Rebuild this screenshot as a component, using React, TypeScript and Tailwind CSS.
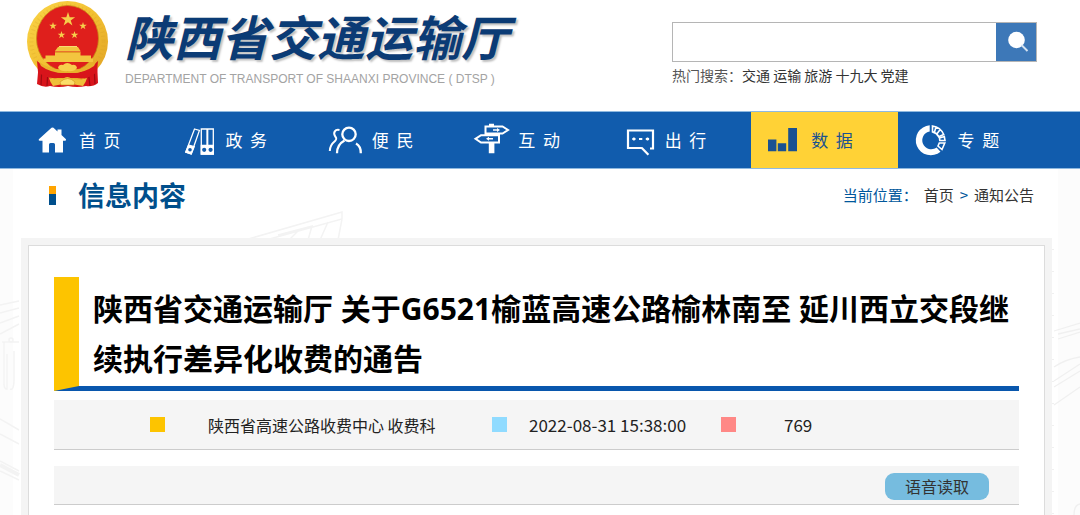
import type { ReactNode } from "react";

const STAR = "0,-1 0.225,-0.309 0.951,-0.309 0.363,0.118 0.588,0.809 0,0.382 -0.588,0.809 -0.363,0.118 -0.951,-0.309 -0.225,-0.309";

function Star({ x, y, r }: { x: number; y: number; r: number }) {
  return <polygon points={STAR} fill="#f6cf4b" transform={`translate(${x} ${y}) scale(${r})`} />;
}

function Emblem() {
  return (
    <svg viewBox="0 0 82 88" className="h-[88px] w-[82px] shrink-0" aria-label="国徽" role="img">
      <defs>
        <linearGradient id="gold" x1="0" y1="0" x2="1" y2="1">
          <stop offset="0" stopColor="#fad548" />
          <stop offset="0.5" stopColor="#f2c032" />
          <stop offset="1" stopColor="#dfa024" />
        </linearGradient>
      </defs>
      <path d="M12 61 L10 84 Q17 88 23 86 Q32 88 41 86 Q50 88 59 86 Q66 87 71 83 L70 61 Z" fill="#d8141b" />
      <path d="M15 66 L14 85 M21 70 L20 86 M61 70 L63 86 M67 66 L68 84" stroke="#9f0b12" strokeWidth="1.2" />
      <circle cx="40.5" cy="41.5" r="40.5" fill="url(#gold)" />
      <circle cx="40.5" cy="41.5" r="36" fill="none" stroke="#d59a1e" strokeWidth="4" strokeDasharray="1 3" opacity="0.25" />
      <ellipse cx="40.5" cy="38.5" rx="31" ry="33" fill="#df1f1c" stroke="#c98a16" strokeWidth="0.8" />
      <Star x={41} y={19.5} r={7.5} />
      <Star x={26} y={26} r={4} />
      <Star x={56} y={26} r={4} />
      <Star x={34.5} y={35} r={4} />
      <Star x={47.5} y={35} r={4} />
      <path d="M31 47 h20 l2.5 4 h-25.5 z M28 51.5 h25.5 v4 h10.5 v3 h2 v3.5 h-49.5 v-3.5 h2 v-3 h9.5 z" fill="#f3c53f" />
      <path d="M32 46.5 h18" stroke="#f9dc70" strokeWidth="1" />
      <path d="M28 52.5 h25" stroke="#dc8d1b" strokeWidth="0.7" />
      <path d="M10 61 Q22 71 35 73 L48 73 Q61 71 71 61 L70 72 Q61 80 50 78 L31 78 Q19 79 11 72 Z" fill="#d8141b" />
      <path d="M12 62 Q25 71 41 69 Q58 71 69 62 L67 66 Q56 74 41 73 Q25 74 14 66 Z" fill="#e9b12b" />
      <path d="M31 68 q1 -4 5 -3 q4 -4 9 0 q4 -1 5 3 q-3 4 -9.5 3 q-6 1 -9.5 -3z" fill="#f7cf4c" />
      <path d="M22 78 q9 3 14 1 q4 -4 9 0 q6 2 15 -1 q-1 4 -4 8 q-9 -2 -15.5 -2 q-7 0 -14.5 2 q-3 -4 -4 -8z" fill="#efc03a" />
      <path d="M33 82 q8 -7 15 0 l-1 3 h-13 z" fill="#fbdd69" stroke="#cf8f1c" strokeWidth="0.6" />
    </svg>
  );
}

function NavIcon({ children }: { children: ReactNode }) {
  return (
    <svg viewBox="0 0 36 34" className="h-[34px] w-9 shrink-0 overflow-visible" fill="none" stroke="#fff" strokeWidth="1.6" aria-hidden="true">
      {children}
    </svg>
  );
}

const HomeIcon = () => (
  <NavIcon>
    <path fill="#fff" stroke="none" d="M16.5 4.8 Q17.5 4 18.5 4.8 L22.5 8.5 V6.5 H26.5 V12 L31 16.2 Q31.2 17.8 30 17.8 H28 V29.5 H20 V21.5 Q20 20 18.5 20 H15.5 Q14 20 14 21.5 V29.5 H7.5 V17.8 H5 Q3.2 17.8 3.8 16.2 Z" />
  </NavIcon>
);

const BindersIcon = () => (
  <NavIcon>
    <path strokeWidth="1.3" d="M13.5 6 L18.4 7.5 L10.2 31 L4.8 29 Z M20.3 6 H26 V31 H20.3 Z M26.7 6 H32.3 V31 H26.7 Z" />
    <path strokeWidth="1.3" d="M7.7 22 L13.2 23.7 L10.2 31 L4.8 29 Z M20.3 22.5 H32.3 V31 H20.3 Z" fill="#fff" />
    <g fill="#115cad" stroke="none">
      <circle cx="9" cy="26.8" r="1.8" />
      <circle cx="23.2" cy="26.8" r="2.1" />
      <circle cx="29.6" cy="26.8" r="2.1" />
    </g>
  </NavIcon>
);

const PeopleIcon = () => (
  <NavIcon>
    <g strokeWidth="2.3">
      <circle cx="21" cy="11.3" r="6.7" />
      <path d="M9 30.3 C9 24 11 20.5 16.5 17.5 M28 20.5 C31.5 22.5 33 25.5 32.8 30.3" />
      <path strokeWidth="2" d="M11.5 7 C7 6 5 9.5 7 13 C8 15 9.5 15.5 7 18 C4 20.5 1.8 23 1.8 28" />
    </g>
  </NavIcon>
);

const SignpostIcon = () => (
  <NavIcon>
    <path strokeWidth="2" d="M11.5 3.5 H28.5 L34 7 L28.5 10.5 H11.5 Z M25 12.2 H7 L1.5 15.8 L7 19.5 H25 Z" />
    <path fill="#fff" stroke="none" d="M15 0.8 H20 V3 H15 Z M14.8 19.5 H20.4 V30.3 H14.8 Z M19 6.2 H23 V5 L26 7 L23 9 V7.7 H19 Z M19 15 H15 V13.8 L12 15.8 L15 17.8 V16.5 H19 Z" />
  </NavIcon>
);

const ChatIcon = () => (
  <NavIcon>
    <path strokeWidth="2.2" d="M20.9 25 H7 V7.5 H32 V25.5 H29 M20.6 24.8 L27.4 31.8" />
    <path strokeWidth="2" d="M11.3 16 H14.5 M18 16 H21.3 M24.8 16 H28.1" />
    <path d="M12.9 14.5 V17.5 M26.5 14.5 V17.5" />
  </NavIcon>
);

const BarsIcon = () => (
  <NavIcon>
    <path fill="#1a5191" stroke="none" d="M1 16.5 H9.4 V28.2 H1 Z M10.8 20.2 H19.2 V28.2 H10.8 Z M21.2 5 H30 V28.2 H21.2 Z" />
  </NavIcon>
);

const DonutIcon = () => (
  <NavIcon>
    <path fill="#fff" stroke="none" d="M15.7 2.3 A15 15 0 1 0 26.5 28.7 L22.6 24.5 A9 9 0 1 1 15.7 8.4 Z" />
    <path strokeWidth="1.6" d="M18.5 3 A14.4 14.4 0 0 1 29.7 11.5 L24.6 13.7 A9 9 0 0 0 18.5 8.9 Z M22 4 L20.5 9 M26 6.7 L22.8 11 M30.3 13.5 L31 17.5 H25.8 L25.5 15 Z M30.8 20 L28 26.5 L24 23 L25.3 20 Z" />
  </NavIcon>
);

const NAV = [
  { label: "首\u00a0\u00a0页", Icon: HomeIcon },
  { label: "政\u00a0\u00a0务", Icon: BindersIcon },
  { label: "便\u00a0\u00a0民", Icon: PeopleIcon },
  { label: "互\u00a0\u00a0动", Icon: SignpostIcon },
  { label: "出\u00a0\u00a0行", Icon: ChatIcon },
  { label: "数\u00a0\u00a0据", Icon: BarsIcon, active: true },
  { label: "专\u00a0\u00a0题", Icon: DonutIcon },
];

const HOT = ["交通", "运输", "旅游", "十九大", "党建"];

function Header() {
  return (
    <header className="flex h-[111px] items-start justify-between bg-white pl-[27px] pr-[43px]">
      <div className="flex gap-4">
        <Emblem />
        <div className="pt-2">
          <div className="text-[48px] font-bold italic leading-[54px] text-[#0b3b75] [text-shadow:2px_2px_2px_rgba(0,0,0,0.25)]">
            陕西省交通运输厅
          </div>
          <div className="mt-[9px] font-['Liberation_Sans',sans-serif] text-[12px] leading-4 text-[#a3a3a3]">
            DEPARTMENT OF TRANSPORT OF SHAANXI PROVINCE ( DTSP )
          </div>
        </div>
      </div>
      <div className="w-[365px] pt-[22px]">
        <form className="flex h-10 border border-[#b5b5b5]" onSubmit={(e) => e.preventDefault()}>
          <input type="text" aria-label="搜索" className="min-w-0 flex-1 bg-white px-2 text-sm outline-none" />
          <button type="submit" aria-label="提交搜索" className="flex w-10 items-center justify-center bg-[#3d78b8] pl-1">
            <svg viewBox="0 0 22 22" className="size-[22px]" aria-hidden="true">
              <circle cx="9.5" cy="9" r="8.3" fill="#fff" />
              <path d="M14.5 14 L20.5 20" stroke="#d5e3f1" strokeWidth="2" />
            </svg>
          </button>
        </form>
        <p className="mt-[3px] text-[14px] leading-5 text-[#555]">
          热门搜索：
          {HOT.map((word, i) => (
            <span key={word}>
              {i > 0 && " "}
              <a href="#" className="text-[#333]">{word}</a>
            </span>
          ))}
        </p>
      </div>
    </header>
  );
}

function Nav() {
  return (
    <nav className="border-y border-[#8fb9e0] bg-[#115cad] pl-[19px] pr-9">
      <ul className="grid grid-cols-7">
        {NAV.map(({ label, Icon, active }) => (
          <li key={label}>
            <a
              href="#"
              className={`flex h-14 items-center gap-2 pl-4 text-[17px] ${active ? "bg-[#ffd236] text-[#1a5191]" : "text-white"}`}
            >
              <Icon />
              {label}
            </a>
          </li>
        ))}
      </ul>
    </nav>
  );
}

function Backdrop() {
  return (
    <div className="pointer-events-none absolute inset-0 flex justify-between overflow-hidden" aria-hidden="true">
      <svg viewBox="0 0 360 346" className="h-[346px] w-[360px] shrink-0" fill="none" stroke="#f3f3f3" strokeWidth="1.5">
        <path d="M0 0 H13 V346 H0 Z" fill="#fcfcfc" stroke="none" />
        <path d="M245 71 L342 43 V50 L266 71 M342 50 L338 71 M278 66 L312 57 L308 71 M290 70 L298 62 M328 53 L320 71" />
        <path d="M0 136 L19 132 M0 144 L19 139 M0 154 L19 147 M0 165 L19 155 M2 173 H19 M4 173 V215 Q4 220 7 220 V185 M10 220 Q14 222 14 210 V182 M0 250 L19 261 M0 265 L19 275 M0 292 L19 302 M0 302 L19 311" />
        <circle cx="11" cy="171" r="2" />
        <path d="M0 296 L19 306" strokeWidth="4" />
      </svg>
      <svg viewBox="0 0 28 346" className="h-[346px] w-7 shrink-0" fill="none" stroke="#f0f0f0" strokeWidth="1.3">
        <path d="M6 0 H28 V346 H6 Z" fill="#fcfcfc" stroke="none" />
        <path d="M0 80 V346" strokeDasharray="1 21" strokeWidth="4" />
        <path d="M2 162 L28 154 M6 165 L28 160 M6 170 L28 163 M2 198 Q14 190 28 188 M2 212 L28 195 M2 218 L28 202 M2 236 L28 218 M22 346 Q22 336 28 335" />
      </svg>
    </div>
  );
}

function Article() {
  return (
    <div className="mt-[11px] flex flex-1 flex-col bg-[#f4f4f4] px-[7px] pt-[7px]">
      <article className="flex-1 border border-b-0 border-[#dcdcdc] bg-white px-[25px] pt-[31px]">
        <div className="flex border-b-[5px] border-[#0957ad]">
          <div className="-mb-[5px] w-[25px] shrink-0 bg-[#fdc400] [clip-path:polygon(0_0,100%_0,100%_calc(100%-5px),0_100%)]" />
          <h1 className="pb-0.5 pl-3.5 pt-[7px] font-['Noto_Sans','Noto_Sans_CJK_SC',sans-serif] text-[30px] font-bold leading-[50px] text-black">
            陕西省交通运输厅 关于G6521榆蓝高速公路榆林南至 延川西立交段继续执行差异化收费的通告
          </h1>
        </div>
        <div className="mt-[9px] grid h-[50px] grid-cols-[342px_229px_1fr] items-center border-b border-[#ccc] bg-[#f5f5f5] pl-24 text-[#222]">
          <div className="flex items-center gap-[43px]">
            <span className="size-[15px] bg-[#fdc400]" />
            <span className="text-[16px]">陕西省高速公路收费中心 收费科</span>
          </div>
          <div className="flex items-center gap-[22px]">
            <span className="size-[15px] bg-[#90dbff]" />
            <time className="text-[17px]">2022-08-31 15:38:00</time>
          </div>
          <div className="flex items-center gap-12">
            <span className="size-[15px] bg-[#ff8886]" />
            <span className="text-[17px]">769</span>
          </div>
        </div>
        <div className="mt-4 flex h-[39px] items-center justify-end border-b border-[#ccc] bg-[#f5f5f5] pr-[30px] pt-0.5">
          <button type="button" className="h-[27px] rounded-[9px] bg-[#76bcdf] px-5 text-[16px] leading-6 text-[#333]">
            语音读取
          </button>
        </div>
      </article>
    </div>
  );
}

export default function App() {
  return (
    <div className="flex min-h-screen flex-col bg-white font-['Noto_Sans_CJK_SC',sans-serif]">
      <Header />
      <Nav />
      <main className="relative flex flex-1 flex-col">
        <Backdrop />
        <div className="relative flex flex-1 flex-col pl-[21px] pr-7">
          <div className="flex h-[58px] items-center justify-between pb-1.5 pl-7 pr-[18px]">
            <div className="flex items-center gap-[22px]">
              <span className="h-[19px] w-[7px] border-t-8 border-[#ffa400] bg-[#004f8c]" />
              <h2 className="text-[27px] font-bold leading-10 text-[#004f8c]">信息内容</h2>
            </div>
            <div className="flex items-center gap-1.5 text-[15px] text-[#333]">
              <span className="text-[#00579c]">当前位置：</span>
              <a href="#">首页</a>
              <span className="text-[#00579c]">&gt;</span>
              <a href="#">通知公告</a>
            </div>
          </div>
          <Article />
        </div>
      </main>
    </div>
  );
}
